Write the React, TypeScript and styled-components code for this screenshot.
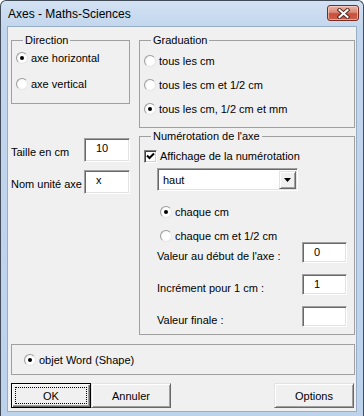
import styled, { createGlobalStyle } from "styled-components";

const GlobalStyle = createGlobalStyle`
  html, body {
    margin: 0;
    padding: 0;
    background: #ffffff;
  }
  body {
    font-family: "Liberation Sans", Arial, sans-serif;
    font-size: 11px;
    color: #000;
  }
`;

const Window = styled.div`
  width: 364px;
  height: 416px;
  box-sizing: border-box;
  display: flex;
  flex-direction: column;
  border: 1px solid #434d59;
  border-bottom: none;
  border-radius: 6px 6px 0 0;
  background: linear-gradient(#d3e2f3, #c2d6ed 26px, #bdd3ec);
  padding-bottom: 4px;
`;

const TitleBar = styled.div`
  height: 25px;
  display: flex;
  align-items: center;
  padding: 0 4px 0 7px;
`;

const Title = styled.span`
  font-size: 12px;
  color: #000;
`;

const CloseButton = styled.div`
  margin-left: auto;
  align-self: flex-start;
  margin-top: 4px;
  width: 32px;
  height: 16px;
  box-sizing: border-box;
  border: 1px solid #7a2b20;
  border-radius: 3px;
  background: linear-gradient(#eab2a4, #d98a78 45%, #c8503b 55%, #cc5f48);
  box-shadow: inset 0 0 0 1px rgba(255, 220, 210, 0.6);
  display: flex;
  align-items: center;
  justify-content: center;
`;

const Client = styled.div`
  flex: 1;
  margin: 0 6px;
  border: 1px solid #98aec6;
  background: #f0f0f0;
  padding: 7px 1px 0 3px;
  display: flex;
  flex-direction: column;
`;

const Columns = styled.div`
  display: grid;
  grid-template-columns: 119px 216px;
  column-gap: 9px;
  align-items: start;
`;

const Column = styled.div`
  display: flex;
  flex-direction: column;
`;

const Group = styled.fieldset<{ $pad: string; $mt?: number }>`
  margin: ${(p) => p.$mt ?? 0}px 0 0 0;
  padding: ${(p) => p.$pad};
  min-width: 0;
  border: 1px solid #a0a0a0;
  display: flex;
  flex-direction: column;
`;

const Legend = styled.legend`
  margin-left: 7px;
  padding: 0 2px;
  line-height: 13px;
  font-size: 11px;
`;

const OptionList = styled.div<{ $gap: number }>`
  display: flex;
  flex-direction: column;
  gap: ${(p) => p.$gap}px;
`;

const RadioRow = styled.div<{ $h?: number; $indent?: number; $mt?: number }>`
  display: flex;
  align-items: center;
  gap: 3px;
  height: ${(p) => p.$h ?? 22}px;
  margin-left: ${(p) => p.$indent ?? 0}px;
  margin-top: ${(p) => p.$mt ?? 0}px;
  white-space: nowrap;
`;

const RadioMark = styled.span<{ $checked?: boolean }>`
  position: relative;
  width: 12px;
  height: 12px;
  box-sizing: border-box;
  border-radius: 50%;
  border: 1px solid;
  border-color: #9c9c9c #e6e6e6 #e6e6e6 #9c9c9c;
  background: radial-gradient(circle at 60% 60%, #ffffff 40%, #eeeeee);
  flex: none;

  &::after {
    content: "";
    display: ${(p) => (p.$checked ? "block" : "none")};
    position: absolute;
    left: 3px;
    top: 3px;
    width: 4px;
    height: 4px;
    border-radius: 50%;
    background: #000;
  }
`;

const CheckBox = styled.span`
  width: 13px;
  height: 13px;
  box-sizing: border-box;
  border: 1px solid;
  border-color: #808080 #ffffff #ffffff #808080;
  box-shadow: inset 1px 1px 0 #404040, inset -1px -1px 0 #d4d0c8;
  background: #fff;
  display: flex;
  align-items: center;
  justify-content: center;
  flex: none;
`;

const FieldRow = styled.div<{ $w: number; $indent?: number; $mt?: number }>`
  display: flex;
  justify-content: space-between;
  align-items: flex-start;
  width: ${(p) => p.$w}px;
  margin-left: ${(p) => p.$indent ?? 0}px;
  margin-top: ${(p) => p.$mt ?? 0}px;
`;

const FieldLabel = styled.span`
  padding-top: 8px;
  line-height: 13px;
  white-space: nowrap;
`;

const TextBox = styled.div<{ $w: number; $h: number }>`
  width: ${(p) => p.$w}px;
  height: ${(p) => p.$h}px;
  box-sizing: border-box;
  padding: 3px 0 0 11px;
  line-height: 13px;
  background: #fff;
  border: 1px solid;
  border-color: #a0a0a0 #ffffff #ffffff #a0a0a0;
  box-shadow: inset 1px 1px 0 #696969, inset -1px -1px 0 #e3e3e3;
`;

const Combo = styled.div`
  width: 141px;
  height: 23px;
  box-sizing: border-box;
  margin: 1px 0 0 13px;
  display: flex;
  background: #fff;
  border: 1px solid;
  border-color: #a0a0a0 #ffffff #ffffff #a0a0a0;
  box-shadow: inset 1px 1px 0 #696969, inset -1px -1px 0 #e3e3e3;
  padding: 2px 1px 1px 2px;
`;

const ComboText = styled.span`
  flex: 1;
  padding-left: 3px;
  line-height: 19px;
`;

const ComboArrow = styled.span`
  width: 17px;
  box-sizing: border-box;
  background: #f0f0f0;
  border: 1px solid;
  border-color: #e3e3e3 #696969 #696969 #e3e3e3;
  box-shadow: inset 1px 1px 0 #ffffff, inset -1px -1px 0 #a0a0a0;
  display: flex;
  align-items: center;
  justify-content: center;
`;

const PlainGroup = styled.div`
  margin-top: 9px;
  height: 31px;
  box-sizing: border-box;
  border: 1px solid #a0a0a0;
  padding-left: 12px;
  display: flex;
  align-items: center;
`;

const ButtonBar = styled.div`
  margin-top: 8px;
  display: flex;
`;

const Button = styled.div<{ $default?: boolean; $push?: boolean }>`
  position: relative;
  width: 80px;
  height: 25px;
  box-sizing: border-box;
  margin-left: ${(p) => (p.$push ? "auto" : "0")};
  margin-right: ${(p) => (p.$push ? "1px" : "0")};
  display: flex;
  align-items: center;
  justify-content: center;
  background: #f0f0f0;
  border: 1px solid;
  border-color: ${(p) =>
    p.$default ? "#000 #000 #000 #000" : "#e3e3e3 #696969 #696969 #e3e3e3"};
  box-shadow: ${(p) =>
    p.$default
      ? "inset 1px 1px 0 #ffffff, inset -1px -1px 0 #696969, inset -2px -2px 0 #a0a0a0"
      : "inset 1px 1px 0 #ffffff, inset -1px -1px 0 #a0a0a0"};

  &::after {
    content: "";
    display: ${(p) => (p.$default ? "block" : "none")};
    position: absolute;
    inset: 3px;
    border: 1px dotted #000;
  }
`;

interface IRadio {
  label: string;
  checked?: boolean;
  h?: number;
  indent?: number;
  mt?: number;
}

const Radio = ({ label, checked, h, indent, mt }: IRadio) => (
  <RadioRow $h={h} $indent={indent} $mt={mt}>
    <RadioMark $checked={checked} />
    <span>{label}</span>
  </RadioRow>
);

const CloseIcon = () => (
  <svg width="13" height="11" viewBox="0 0 13 11">
    <path d="M2.5 2 L10.5 9 M10.5 2 L2.5 9" stroke="#5a2a24" strokeWidth="4" strokeLinecap="square" />
    <path d="M2.5 2 L10.5 9 M10.5 2 L2.5 9" stroke="#ffffff" strokeWidth="2" strokeLinecap="square" />
  </svg>
);

export default function App() {
  return (
    <>
      <GlobalStyle />
      <Window>
        <TitleBar>
          <Title>Axes - Maths-Sciences</Title>
          <CloseButton>
            <CloseIcon />
          </CloseButton>
        </TitleBar>
        <Client>
          <Columns>
            <Column>
              <Group $pad="0 0 8px 4px">
                <Legend>Direction</Legend>
                <OptionList $gap={4}>
                  <Radio label="axe horizontal" checked />
                  <Radio label="axe vertical" />
                </OptionList>
              </Group>
              <FieldRow $w={119} $mt={34}>
                <FieldLabel>Taille en cm</FieldLabel>
                <TextBox $w={46} $h={24}>10</TextBox>
              </FieldRow>
              <FieldRow $w={119} $mt={8}>
                <FieldLabel>Nom unité axe</FieldLabel>
                <TextBox $w={46} $h={24}>x</TextBox>
              </FieldRow>
            </Column>
            <Column>
              <Group $pad="3px 0 7px 4px">
                <Legend>Graduation</Legend>
                <OptionList $gap={2}>
                  <Radio label="tous les cm" />
                  <Radio label="tous les cm et 1/2 cm" />
                  <Radio label="tous les cm, 1/2 cm et mm" checked />
                </OptionList>
              </Group>
              <Group $pad="2px 0 7px 4px" $mt={2}>
                <Legend>Numérotation de l'axe</Legend>
                <RadioRow>
                  <CheckBox>
                    <svg width="9" height="9" viewBox="0 0 9 9">
                      <path d="M1 3.5 L3.5 6 L8 1.5" fill="none" stroke="#000" strokeWidth="2" />
                    </svg>
                  </CheckBox>
                  <span>Affichage de la numérotation</span>
                </RadioRow>
                <Combo>
                  <ComboText>haut</ComboText>
                  <ComboArrow>
                    <svg width="7" height="4" viewBox="0 0 7 4">
                      <path d="M0 0 H7 L3.5 4 Z" fill="#000" />
                    </svg>
                  </ComboArrow>
                </Combo>
                <Radio label="chaque cm" checked h={14} indent={16} mt={14} />
                <Radio label="chaque cm et 1/2 cm" h={14} indent={16} mt={10} />
                <FieldRow $w={190} $indent={13} $mt={-1}>
                  <FieldLabel>Valeur au début de l'axe :</FieldLabel>
                  <TextBox $w={45} $h={21}>0</TextBox>
                </FieldRow>
                <FieldRow $w={190} $indent={13} $mt={11}>
                  <FieldLabel>Incrément pour 1 cm :</FieldLabel>
                  <TextBox $w={45} $h={21}>1</TextBox>
                </FieldRow>
                <FieldRow $w={190} $indent={13} $mt={11}>
                  <FieldLabel>Valeur finale :</FieldLabel>
                  <TextBox $w={45} $h={21} />
                </FieldRow>
              </Group>
            </Column>
          </Columns>
          <PlainGroup>
            <Radio label="objet Word (Shape)" checked />
          </PlainGroup>
          <ButtonBar>
            <Button $default>OK</Button>
            <Button>Annuler</Button>
            <Button $push>Options</Button>
          </ButtonBar>
        </Client>
      </Window>
    </>
  );
}
